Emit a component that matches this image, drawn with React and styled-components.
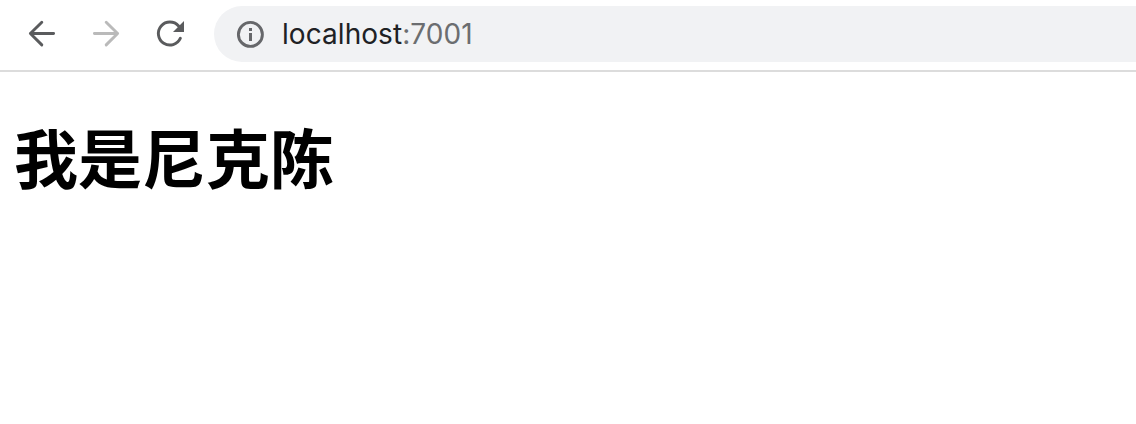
import React from "react";
import styled, { createGlobalStyle } from "styled-components";

const GlobalStyle = createGlobalStyle`
  body { margin: 0; background: #fff; overflow: hidden; }
`;
const Page = styled.div`
  height: 424px;
  display: flex;
  flex-direction: column;
`;
const Toolbar = styled.header`
  box-sizing: border-box;
  height: 72px;
  flex: none;
  display: flex;
  align-items: flex-start;
  padding: 6px 0 0 22px;
  border-bottom: 2px solid #dcdcdc;
`;
const NavButton = styled.button`
  display: flex;
  align-items: center;
  justify-content: center;
  width: 40px;
  height: 56px;
  margin: 0 24px 0 0;
  padding: 0;
  border: 0;
  background: none;
  color: ${(p) => (p.disabled ? "#bababa" : "#5a5b5d")};
`;
const Icon = styled.svg`
  display: block;
  flex: none;
  width: ${(p) => p.$size}px;
  height: ${(p) => p.$size}px;
  fill: none;
  stroke: currentColor;
  stroke-width: 2.9;
  stroke-linecap: round;
  stroke-linejoin: round;
`;
const AddressBar = styled.div`
  box-sizing: border-box;
  flex: 1;
  height: 56px;
  display: flex;
  align-items: center;
  gap: 15px;
  padding-left: 20px;
  border-radius: 28px 0 0 28px;
  background: #f1f2f4;
  color: #66676a;
`;
const Url = styled.span`
  padding-left: 1px;
  font: 28px/56px Inter, sans-serif;
  letter-spacing: 0.06px;
  color: #6b6d70;
`;
const Host = styled.span`
  color: #202124;
`;
const Title = styled.h1`
  margin: 35px 0 0 14px;
  font: 700 64px/96px "Noto Sans CJK SC", sans-serif;
  color: #000;
`;

export default function App() {
  return (
    <Page>
      <GlobalStyle />
      <Toolbar>
        <NavButton aria-label="Back">
          <Icon $size={40} viewBox="0 0 40 40"><path d="M31.6 19.5H8.4M19.8 8.2 8.4 19.5l11.4 11.4" /></Icon>
        </NavButton>
        <NavButton aria-label="Forward" disabled>
          <Icon $size={40} viewBox="0 0 40 40"><path d="M8.4 19.5h23.2M20.2 8.2l11.4 11.3-11.4 11.4" /></Icon>
        </NavButton>
        <NavButton aria-label="Reload">
          <Icon $size={40} viewBox="0 0 40 40">
            <path d="M30.4 24.2A11.5 11.5 0 1 1 28.6 12" />
            <path d="M34 7v11H23z" fill="currentColor" stroke="none" />
          </Icon>
        </NavButton>
        <AddressBar>
          <Icon $size={32} viewBox="0 0 32 32">
            <circle cx="16.4" cy="16.4" r="12" />
            <path d="M15 10h3v3h-3zM15 15h3v8h-3z" fill="currentColor" stroke="none" />
          </Icon>
          <Url><Host>localhost</Host>:7001</Url>
        </AddressBar>
      </Toolbar>
      <Title>我是尼克陈</Title>
    </Page>
  );
}
